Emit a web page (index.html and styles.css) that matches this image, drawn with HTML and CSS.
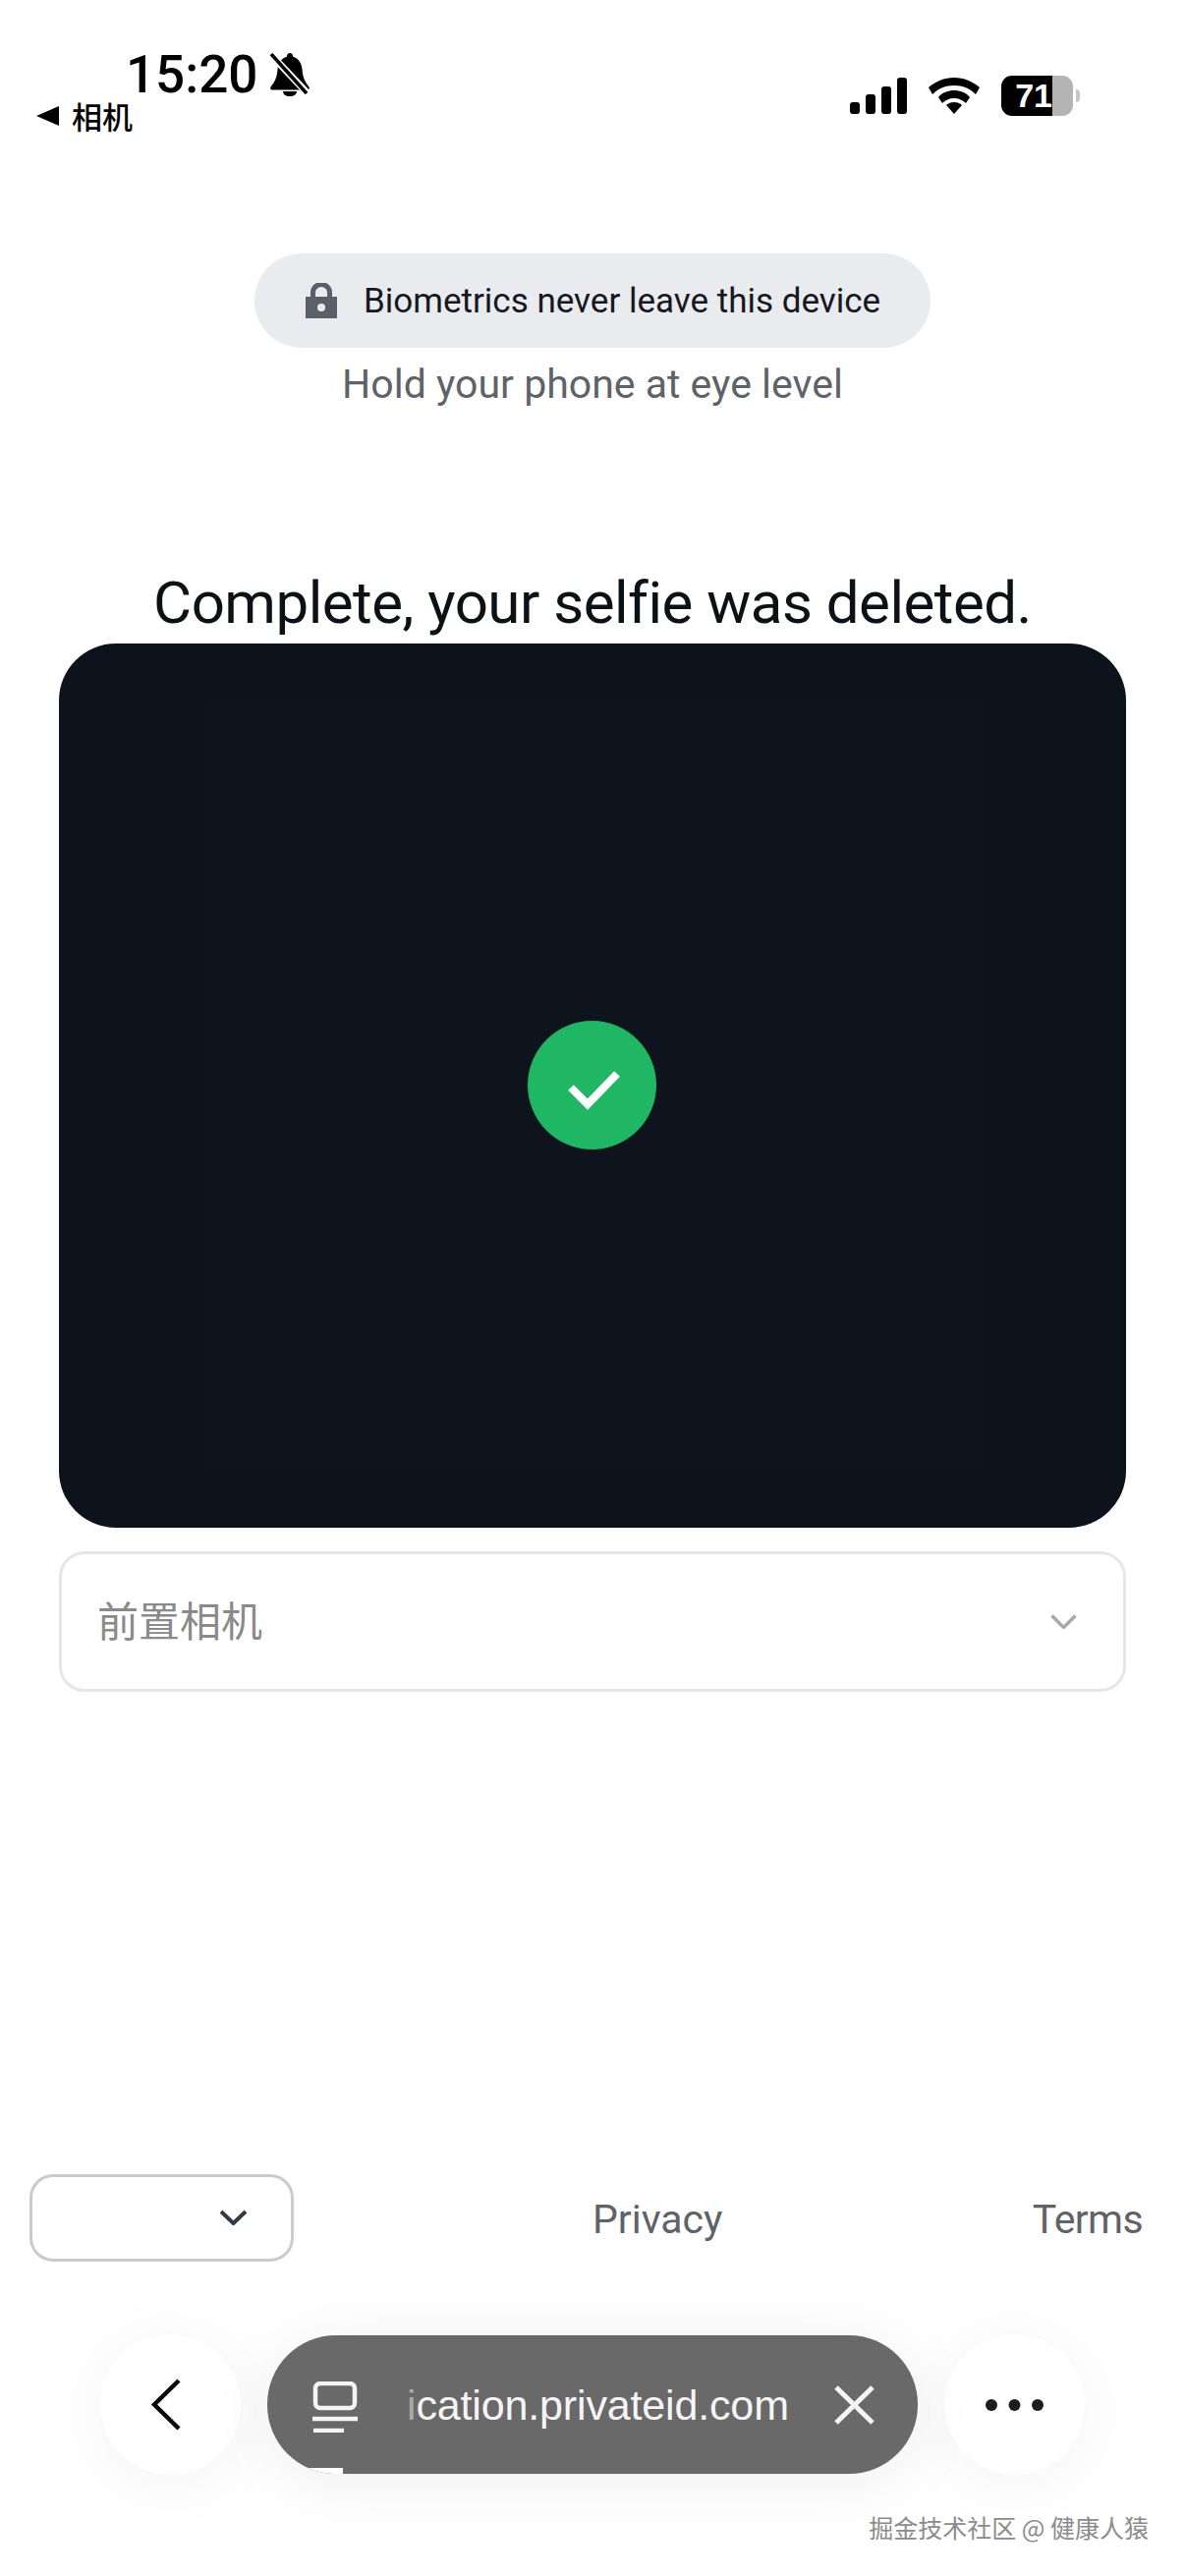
FILE: index.html
```html
<!DOCTYPE html>
<html lang="en">
<head>
<meta charset="utf-8">
<title>Selfie complete</title>
<link rel="stylesheet" href="styles.css">
</head>
<body>
<div class="page">
  <header class="status">
    <div class="status-left">
      <div class="time-row">
        <span class="time">15:20</span>
        <svg class="bell" viewBox="0 0 42 44"><path d="M21 0c2 0 3 1.500 3 3.500 6 2 9 7 9.500 13 .5 8 3 13 7 18 1 1.500 0 3-1.500 3H3c-1.500 0-2.500-1.500-1.500-3 4-5 6.500-10 7-18C9 10.500 12 5.500 18 3.500 18 1.500 19 0 21 0zM14 39h14c0 3-3 5-7 5s-7-2-7-5z"/><path class="bell-gap" d="M3 3l36 38"/><path class="bell-line" d="M2 1l36 40"/></svg>
      </div>
      <div class="back-row">
        <svg class="back-tri" viewBox="0 0 23 20"><path d="M23 0v20L0 10z"/></svg>
        <span class="back-text">相机</span>
      </div>
    </div>
    <div class="status-right">
      <svg class="signal" viewBox="0 0 58 37"><rect x="0" y="25" width="10" height="12" rx="3"/><rect x="16" y="17" width="10" height="20" rx="3"/><rect x="32" y="9" width="10" height="28" rx="3"/><rect x="48" y="0" width="10" height="37" rx="3"/></svg>
      <svg class="wifi" viewBox="0 0 52 37"><path d="M26 0c10 0 19 4 26 10l-4 7C42 11 35 8 26 8S10 11 4 17l-4-7C7 4 16 0 26 0z"/><path d="M26 13c6 0 12 2 16 7l-4 6c-3-3-7-5-12-5s-9 2-12 5l-4-6c4-5 10-7 16-7z"/><path d="M26 25c3 0 6 1 8 3L26 37l-8-9c2-2 5-3 8-3z"/></svg>
      <div class="battery">
        <div class="battery-fill"><span class="battery-text">71</span></div>
        <div class="battery-rest"></div>
        <div class="battery-nub"></div>
      </div>
    </div>
  </header>

  <main class="main">
    <div class="pill">
      <svg class="lock" viewBox="0 0 32 36"><path d="M0 14h32v22H0z"/><path class="lock-shackle" d="M7.500 14V9.500a8.500 8 0 0 1 17 0V14"/><circle class="lock-hole" cx="16" cy="25" r="4"/></svg>
      <span class="pill-text">Biometrics never leave this device</span>
    </div>
    <p class="hint">Hold your phone at eye level</p>
    <h1 class="title">Complete, your selfie was deleted.</h1>
    <div class="camera">
      <div class="camera-inner">
        <div class="check">
          <svg class="check-icon" viewBox="0 0 131 131"><path d="M44 68l17 17 30-31"/></svg>
        </div>
      </div>
    </div>
    <div class="select">
      <span class="select-text">前置相机</span>
      <svg class="select-chev" viewBox="0 0 27 15"><path d="M1.500 1.500l12 12 12-12"/></svg>
    </div>
  </main>

  <footer class="foot">
    <div class="foot-links">
      <div class="lang">
        <svg class="lang-chev" viewBox="0 0 29 16"><path d="M2 2l12.500 12L27 2"/></svg>
      </div>
      <a class="link link-privacy">Privacy</a>
      <a class="link link-terms">Terms</a>
    </div>
    <div class="browser">
      <button class="round">
        <svg class="nav-back" viewBox="0 0 31 53"><path d="M29 2L4 26.500 29 51"/></svg>
      </button>
      <div class="url">
        <svg class="url-icon" viewBox="0 0 46 52"><rect x="3" y="2" width="40" height="25" rx="5"/><path d="M0 38h46M1 50h31"/></svg>
        <span class="url-text"><span class="url-fade">i</span>cation.privateid.com</span>
        <svg class="url-close" viewBox="0 0 41 40"><path d="M2 2l37 36M39 2L2 38"/></svg>
        <span class="url-progress"></span>
      </div>
      <button class="round">
        <svg class="nav-more" viewBox="0 0 59 12"><circle cx="6" cy="6" r="6"/><circle cx="29.500" cy="6" r="6"/><circle cx="53" cy="6" r="6"/></svg>
      </button>
    </div>
    <div class="watermark">掘金技术社区 @ 健康人猿</div>
  </footer>
</div>
</body>
</html>
```

FILE: styles.css
```css
* { box-sizing: border-box; }
html, body { margin: 0; padding: 0; background: #fff; }
body { font-family: "Roboto", "Liberation Sans", "Noto Sans CJK SC", sans-serif; }
.page { width: 1206px; height: 2622px; overflow: hidden; display: flex; flex-direction: column; background: #fff; }

.status { height: 258px; padding: 48px 106px 0 37px; display: flex; justify-content: space-between; align-items: flex-start; flex: none; }
.status-left { display: flex; flex-direction: column; }
.time-row { display: flex; align-items: center; gap: 12px; padding-left: 91px; height: 56px; }
.time { font: 500 53px/56px "Roboto", sans-serif; color: #000; }
.bell { width: 42px; height: 44px; fill: #000; }
.bell-gap { fill: none; stroke: #fff; stroke-width: 7px; }
.bell-line { fill: none; stroke: #000; stroke-width: 3.500px; }
.back-row { display: flex; align-items: center; gap: 13px; height: 34px; margin-top: -3px; }
.back-tri { width: 23px; height: 20px; fill: #000; }
.back-text { font: 500 31px/34px "Noto Sans CJK SC", sans-serif; color: #000; }

.status-right { display: flex; align-items: center; gap: 22px; padding-top: 29px; }
.signal { width: 58px; height: 37px; fill: #000; }
.wifi { width: 52px; height: 37px; fill: #000; }
.battery { display: flex; align-items: center; width: 81px; height: 41px; position: relative; }
.battery-fill { width: 52px; height: 41px; background: #000; border-radius: 11px 0 0 11px; display: flex; align-items: center; justify-content: flex-end; overflow: hidden; }
.battery-text { font: 700 34px/41px "Liberation Sans", sans-serif; color: #fff; }
.battery-rest { width: 21px; height: 41px; background: #b4b4b4; border-radius: 0 11px 11px 0; }
.battery-nub { width: 4px; height: 13px; margin-left: 3px; background: #c4c4c4; border-radius: 0 4px 4px 0; }

.main { padding: 0 60px; display: flex; flex-direction: column; align-items: center; flex: none; }
.pill { width: 688px; height: 96px; border-radius: 48px; background: #e9ebef; display: flex; align-items: center; padding-left: 52px; gap: 27px; }
.lock { width: 32px; height: 36px; fill: #5a6068; flex: none; }
.lock-shackle { fill: none; stroke: #5a6068; stroke-width: 5px; }
.lock-hole { fill: #e9ebef; }
.pill-text { font-size: 35px; line-height: 42px; color: #15181e; white-space: nowrap; margin-top: 2px; }
.hint { margin: 12px 0 0; font-size: 41px; line-height: 50px; color: #5f6368; white-space: nowrap; }
.title { margin: 162px 0 0; font-size: 60px; line-height: 72px; font-weight: 400; color: #0d1015; white-space: nowrap; letter-spacing: -0.5px; }
.camera { width: 1086px; height: 900px; margin-top: 5px; border-radius: 58px; background: #0d131c; display: flex; align-items: center; justify-content: center; flex: none; }
.camera-inner { width: 783px; height: 783px; background: #0e141e; display: flex; align-items: center; justify-content: center; }
.check { width: 131px; height: 131px; border-radius: 50%; background: #1fb764; margin-top: -2px; margin-left: -2px; }
.check-icon { display: block; width: 131px; height: 131px; fill: none; stroke: #fff; stroke-width: 8px; }
.select { width: 1086px; height: 143px; margin-top: 24px; border: 3px solid #e6e6e8; border-radius: 26px; background: #fff; display: flex; align-items: center; justify-content: space-between; padding: 0 47px 0 36px; flex: none; }
.select-text { font: 400 42px/50px "Noto Sans CJK SC", sans-serif; color: #8a8a8a; margin-bottom: 6px; }
.select-chev { width: 27px; height: 15px; fill: none; stroke: #a8a8a8; stroke-width: 3.500px; }

.foot { margin-top: auto; display: flex; flex-direction: column; flex: none; }
.foot-links { display: flex; align-items: center; padding: 0 43px 0 30px; height: 89px; }
.lang { width: 269px; height: 89px; border: 3px solid #cbcbcb; border-radius: 24px; display: flex; align-items: center; justify-content: flex-end; padding-right: 44px; flex: none; }
.lang-chev { width: 29px; height: 16px; fill: none; stroke: #333a45; stroke-width: 4px; margin-top: -2px; }
.link { font-size: 41px; line-height: 48px; color: #5f6368; margin-top: 2px; }
.link-privacy { margin-left: 304px; margin-right: auto; }
.link-terms { letter-spacing: -0.6px; }

.browser { display: flex; align-items: center; gap: 27px; padding: 0 102px; margin-top: 74px; height: 143px; }
.round { width: 143px; height: 143px; border-radius: 50%; background: #fff; border: 0; padding: 0; display: flex; align-items: center; justify-content: center; box-shadow: 0 8px 70px rgba(0,0,0,.05); flex: none; }
.nav-back { width: 31px; height: 53px; fill: none; stroke: #0a0a0a; stroke-width: 4.500px; margin-right: 10px; }
.nav-more { width: 59px; height: 12px; fill: #1d1d1f; }
.url { width: 662px; height: 141px; border-radius: 70px; background: #696969; display: flex; align-items: center; padding: 0 44px 0 46px; position: relative; box-shadow: 0 8px 70px rgba(0,0,0,.07); overflow: hidden; flex: none; }
.url-icon { width: 46px; height: 52px; fill: none; stroke: #f4f4f4; stroke-width: 4.500px; flex: none; margin-top: 4px; }
.url-text { font: 400 43px/50px "Liberation Sans", sans-serif; color: #f5f5f5; margin-left: 50px; white-space: nowrap; letter-spacing: -0.15px; }
.url-fade { color: #a9a9a9; }
.url-close { width: 41px; height: 40px; fill: none; stroke: #f4f4f4; stroke-width: 5px; margin-left: auto; flex: none; }
.url-progress { position: absolute; left: 35px; bottom: 0; width: 42px; height: 6px; background: #fff; }

.watermark { align-self: flex-end; margin: 41px 37px 37px 0; font: 400 25px/25px "Noto Sans CJK SC", sans-serif; color: #8b8b8b; white-space: nowrap; text-shadow: 0 0 2px #fff; }
```
